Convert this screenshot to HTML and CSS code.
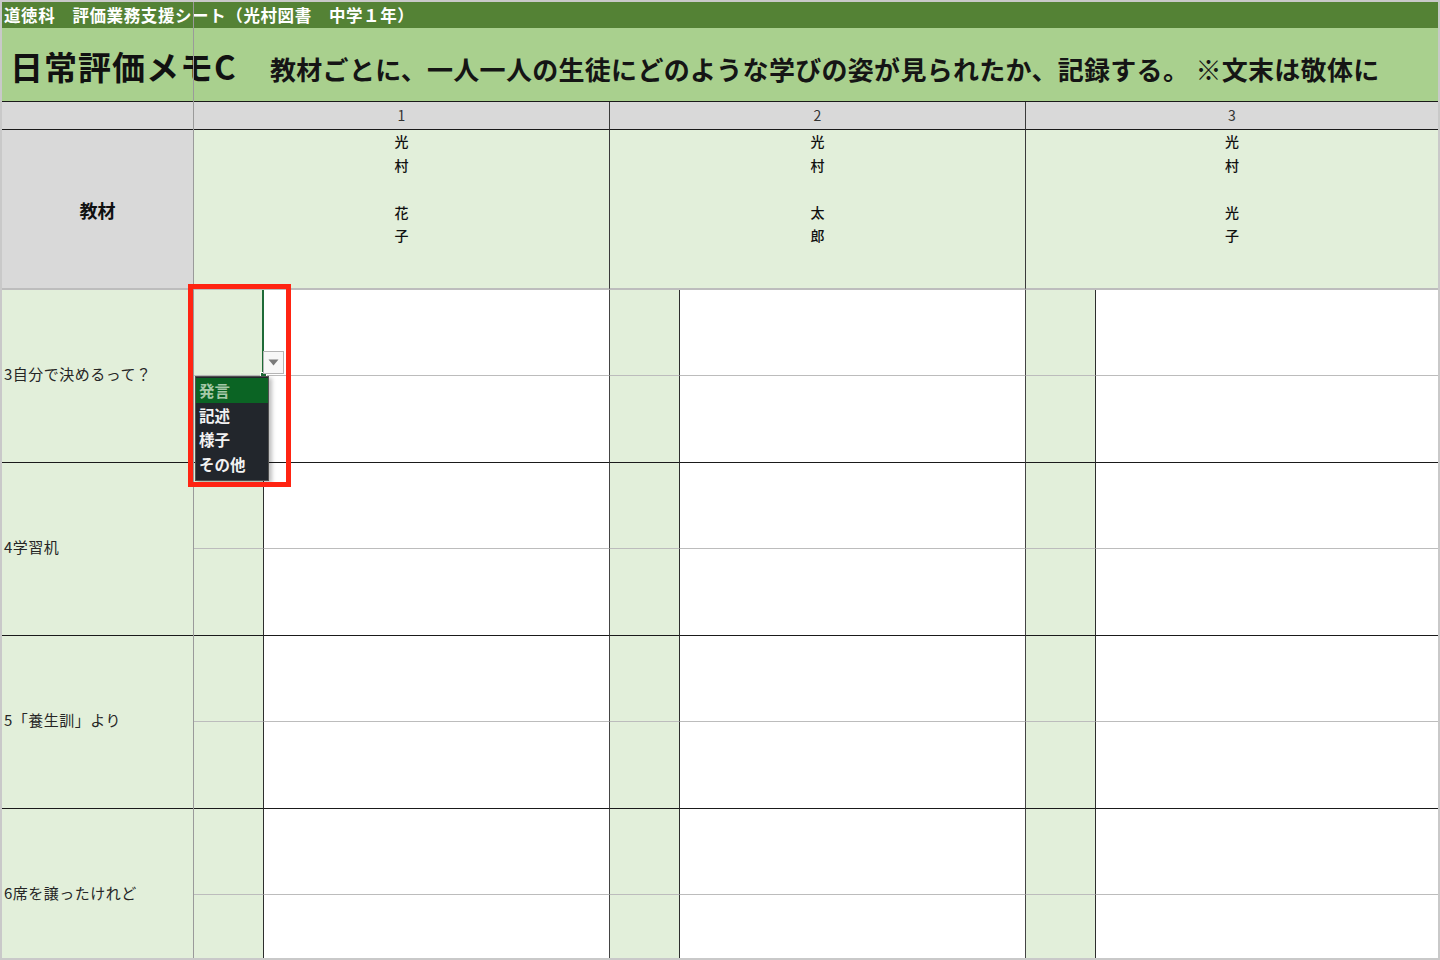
FILE: index.html
```html
<!DOCTYPE html>
<html lang="ja">
<head>
<meta charset="utf-8">
<title>日常評価メモC</title>
<link rel="stylesheet" href="styles.css">
</head>
<body>
<div class="sheet">
  <div class="title-bar">道徳科　評価業務支援シート（光村図書　中学１年）</div>
  <div class="memo-row">
    <span class="memo-title">日常評価メモC</span>
    <span class="memo-desc">教材ごとに、一人一人の生徒にどのような学びの姿が見られたか、記録する。 ※文末は敬体に</span>
  </div>
  <div class="grid">
    <div class="cell num-blank"></div>
    <div class="cell num">1</div>
    <div class="cell num">2</div>
    <div class="cell num last">3</div>

    <div class="cell head-label">教材</div>
    <div class="cell head-name"><div class="vname"><span>光</span><span>村</span><span></span><span>花</span><span>子</span></div></div>
    <div class="cell head-name"><div class="vname"><span>光</span><span>村</span><span></span><span>太</span><span>郎</span></div></div>
    <div class="cell head-name last"><div class="vname"><span>光</span><span>村</span><span></span><span>光</span><span>子</span></div></div>

    <div class="cell label">3自分で決めるって？</div>
    <div class="cell narrow sub-a"></div><div class="cell wide sub-a"></div>
    <div class="cell narrow sub-a"></div><div class="cell wide sub-a"></div>
    <div class="cell narrow sub-a"></div><div class="cell wide sub-a last"></div>
    <div class="cell narrow sub-b"></div><div class="cell wide sub-b"></div>
    <div class="cell narrow sub-b"></div><div class="cell wide sub-b"></div>
    <div class="cell narrow sub-b"></div><div class="cell wide sub-b last"></div>

    <div class="cell label">4学習机</div>
    <div class="cell narrow sub-a"></div><div class="cell wide sub-a"></div>
    <div class="cell narrow sub-a"></div><div class="cell wide sub-a"></div>
    <div class="cell narrow sub-a"></div><div class="cell wide sub-a last"></div>
    <div class="cell narrow sub-b"></div><div class="cell wide sub-b"></div>
    <div class="cell narrow sub-b"></div><div class="cell wide sub-b"></div>
    <div class="cell narrow sub-b"></div><div class="cell wide sub-b last"></div>

    <div class="cell label">5「養生訓」より</div>
    <div class="cell narrow sub-a"></div><div class="cell wide sub-a"></div>
    <div class="cell narrow sub-a"></div><div class="cell wide sub-a"></div>
    <div class="cell narrow sub-a"></div><div class="cell wide sub-a last"></div>
    <div class="cell narrow sub-b"></div><div class="cell wide sub-b"></div>
    <div class="cell narrow sub-b"></div><div class="cell wide sub-b"></div>
    <div class="cell narrow sub-b"></div><div class="cell wide sub-b last"></div>

    <div class="cell label">6席を譲ったけれど</div>
    <div class="cell narrow sub-a"></div><div class="cell wide sub-a"></div>
    <div class="cell narrow sub-a"></div><div class="cell wide sub-a"></div>
    <div class="cell narrow sub-a"></div><div class="cell wide sub-a last"></div>
    <div class="cell narrow sub-b"></div><div class="cell wide sub-b"></div>
    <div class="cell narrow sub-b"></div><div class="cell wide sub-b"></div>
    <div class="cell narrow sub-b"></div><div class="cell wide sub-b last"></div>
  </div>

  <div class="freeze-line"></div>
  <div class="sel-edge"></div>
  <div class="fill-handle"></div>
  <div class="dd-button">
    <svg width="11" height="7" viewBox="0 0 11 7"><path d="M0.5 0.5 L10.5 0.5 L5.5 6.5 Z" fill="#7a7a7a"/></svg>
  </div>
  <ul class="dd-list">
    <li class="active">発言</li>
    <li>記述</li>
    <li>様子</li>
    <li>その他</li>
  </ul>
  <div class="red-box"></div>
</div>
</body>
</html>
```

FILE: styles.css
```css
* { box-sizing: border-box; }

html, body {
  margin: 0;
  padding: 0;
  background: #ffffff;
}

body {
  font-family: "Noto Sans CJK JP", "Noto Sans", sans-serif;
  color: #111;
}

.sheet {
  position: relative;
  width: 1440px;
  height: 960px;
  border: 2px solid #c9c9c9;
  overflow: hidden;
  background: #ffffff;
}

.title-bar {
  height: 26px;
  background: #548235;
  color: #ffffff;
  font-weight: 700;
  font-size: 16.5px;
  letter-spacing: 0.6px;
  line-height: 26px;
  padding-left: 2px;
  white-space: nowrap;
}

.memo-row {
  height: 74px;
  background: #a9d08e;
  border-bottom: 1px solid #1a1a1a;
  display: flex;
  align-items: center;
  padding-left: 8px;
  padding-top: 3px;
  white-space: nowrap;
}

.memo-title {
  flex: 0 0 260px;
  font-size: 33px;
  font-weight: 700;
  letter-spacing: 1px;
  line-height: 40px;
  color: #111;
}

.memo-desc {
  font-size: 26px;
  font-weight: 700;
  letter-spacing: 0.3px;
  line-height: 34px;
  padding-top: 6px;
  color: #151515;
}

.grid {
  display: grid;
  grid-template-columns: 192px 70px 346px 70px 346px 70px 342px;
  grid-template-rows: 28px 160px repeat(4, 86px 87px);
}

.cell {
  border-right: 1px solid #3a3a3a;
}

.cell.last {
  border-right: none;
}

.num-blank {
  background: #d9d9d9;
  border-right: 1px solid #9a9a9a;
  border-bottom: 1px solid #1a1a1a;
}

.num {
  grid-column: span 2;
  background: #d9d9d9;
  border-bottom: 1px solid #1a1a1a;
  text-align: center;
  font-size: 14px;
  line-height: 27px;
  color: #333;
}

.head-label {
  background: #d9d9d9;
  border-right: 1px solid #9a9a9a;
  border-bottom: 2px solid #bdbdbd;
  display: flex;
  align-items: center;
  justify-content: center;
  font-size: 18px;
  font-weight: 700;
  color: #111;
  padding-top: 1px;
}

.head-name {
  grid-column: span 2;
  background: #e2efda;
  border-bottom: 2px solid #bdbdbd;
  display: flex;
  justify-content: center;
}

.vname {
  display: flex;
  flex-direction: column;
  align-items: center;
}

.vname span {
  display: block;
  height: 23.6px;
  line-height: 23.6px;
  font-size: 14px;
  font-weight: 500;
  color: #111;
}

.label {
  grid-row: span 2;
  background: #e2efda;
  border-right: 1px solid #9a9a9a;
  border-bottom: 1px solid #1a1a1a;
  display: flex;
  align-items: center;
  padding-left: 2px;
  padding-bottom: 6px;
  font-size: 15px;
  letter-spacing: 0.5px;
  color: #262626;
  white-space: nowrap;
}

.narrow {
  background: #e2efda;
  border-right: 1px solid #2e2e2e;
}

.wide {
  background: #ffffff;
  border-right: 1px solid #444;
}

.sub-a {
  border-bottom: 1px solid #bcbcbc;
}

.sub-b {
  border-bottom: 1px solid #1a1a1a;
}

/* overlays */
.freeze-line {
  position: absolute;
  left: 191px;
  top: 0;
  bottom: 0;
  width: 1px;
  background: #9a9a9a;
}

.sel-edge {
  position: absolute;
  left: 260px;
  top: 288px;
  width: 2px;
  height: 85px;
  background: #1e6b37;
}

.fill-handle {
  position: absolute;
  left: 258px;
  top: 370px;
  width: 7px;
  height: 7px;
  background: #1e6b37;
  border: 1px solid #ffffff;
}

.dd-button {
  position: absolute;
  left: 261px;
  top: 349px;
  width: 21px;
  height: 23px;
  background: #f7f7f7;
  border: 1px solid #b5b5b5;
  display: flex;
  align-items: center;
  justify-content: center;
}

.dd-list {
  position: absolute;
  left: 193px;
  top: 374px;
  width: 74px;
  height: 105px;
  margin: 0;
  padding: 1px 0 0 0;
  list-style: none;
  background: #22262c;
  border: 1px solid #505050;
  box-shadow: 3px 2px 4px rgba(0, 0, 0, 0.25);
}

.dd-list li {
  height: 24.7px;
  line-height: 24.7px;
  padding-left: 3px;
  font-size: 15.5px;
  font-weight: 700;
  color: #f2f2f2;
  white-space: nowrap;
}

.dd-list li.active {
  background: #0b6424;
  color: #a6c9a8;
}

.red-box {
  position: absolute;
  left: 186px;
  top: 282px;
  width: 103px;
  height: 203px;
  border: 5px solid #ff2412;
}
```
